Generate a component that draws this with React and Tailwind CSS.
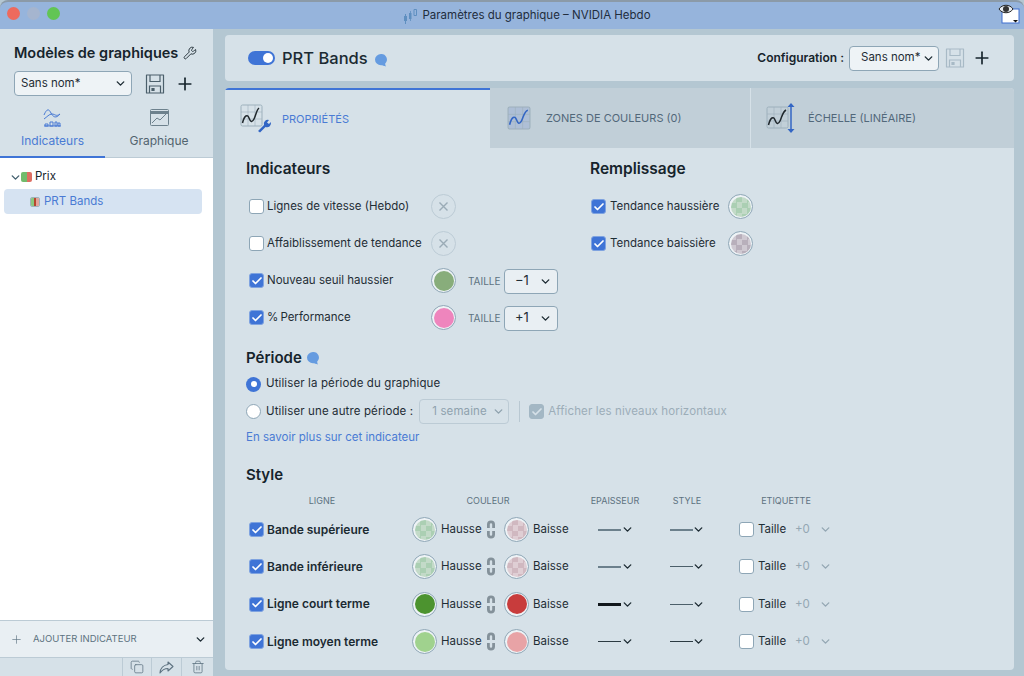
import { Check, ChevronDown, Plus, Wrench, Copy, Trash2 } from "lucide-react";

const font = { fontFamily: "Inter, 'Noto Sans', sans-serif" };

const Checkbox = ({ checked, faded }) => (
  <span
    className={`flex h-[15px] w-[15px] shrink-0 items-center justify-center rounded-[3px] border ${
      checked
        ? faded
          ? "border-[#a3b7c4] bg-[#a3b7c4]"
          : "border-[#7fa3e0] bg-[#3f74d6]"
        : "border-[#8ea6b6] bg-white"
    }`}
  >
    {checked && <Check size={12} strokeWidth={3.5} className={faded ? "text-[#d6e1e8]" : "text-white"} />}
  </span>
);

const Swatch = ({ className }) => (
  <span className="flex h-[25px] w-[25px] shrink-0 items-center justify-center rounded-full border border-[#8ea6b6] bg-[#eef3f6]">
    <span className={`block h-[20px] w-[20px] rounded-full ${className}`} />
  </span>
);

const Disabled = () => (
  <span className="flex h-[25px] w-[25px] shrink-0 items-center justify-center rounded-full border border-[#bccbd5] text-[#9aabb6]">
    <svg width="11" height="11" viewBox="0 0 11 11" fill="none" stroke="currentColor" strokeWidth="1.4">
      <path d="M1.5 1.5l8 8M9.5 1.5l-8 8" />
    </svg>
  </span>
);

const Chev = ({ className = "text-[#1d2b33]" }) => (
  <ChevronDown size={13} strokeWidth={2.6} className={`-mx-px shrink-0 ${className}`} />
);

const Disk = ({ className, size = 20 }) => (
  <svg width={size} height={size} viewBox="0 0 20 20" fill="none" stroke="currentColor" strokeWidth="1.2" className={className}>
    <path d="M1.5 1h17v18h-17z" strokeLinejoin="round" />
    <path d="M5 1v6.5h10V1M4.5 19v-7h11v7" />
    <path d="M7 14.5h2v2H7z" fill="currentColor" />
  </svg>
);

const Bubble = ({ className = "" }) => (
  <svg width="14" height="14" viewBox="0 0 14 14" className={className}>
    <path d="M7 1a6 5.6 0 1 0 0 11.2c1.5 0 3 .6 5 1.3-.6-1-.9-2-.8-2.9A5.6 5.6 0 0 0 7 1z" fill="#659be0" />
  </svg>
);

const GridBox = ({ fill = "none", stroke = "#9db0bc" }) => (
  <>
    <rect x="1" y="1" width="21" height="21" rx="1.5" fill={fill} stroke={stroke} />
    <path d="M8 1v21M15 1v21M1 8h21M1 15h21" stroke={stroke} strokeWidth="0.6" />
  </>
);

const PropsIcon = () => (
  <svg width="32" height="30" viewBox="0 0 32 30" fill="none">
    <GridBox />
    <path d="M2.5 19c2-8 5-9 6.5-5s3 5 5 1 2.500-9 5-11" stroke="#20282d" strokeWidth="1.5" />
    <path d="M18 27l6-6a4 4 0 0 1 5-5l-2 2.500 2 1.500 1.800-2a4 4 0 0 1-5.300 5l-5.500 5.500z" fill="#3366c4" />
  </svg>
);

const ZonesIcon = () => (
  <svg width="24" height="24" viewBox="0 0 23 23" fill="none">
    <GridBox fill="#aebfd6" />
    <path d="M2.500 18c2-8 5-9 6.500-5s3 5 5 1 2.500-9 6-10" stroke="#3366c4" strokeWidth="1.500" />
  </svg>
);

const ScaleIcon = () => (
  <svg width="30" height="32" viewBox="0 0 30 32" fill="none">
    <g transform="translate(0 4)">
      <GridBox />
      <path d="M2.500 19c2-8 5-9 6.500-5s3 5 5 1 2.500-9 6-11" stroke="#20282d" strokeWidth="1.500" />
    </g>
    <path d="M25 4v24" stroke="#3366c4" strokeWidth="1.500" />
    <path d="M25 1l3.500 4h-7zM25 31l3.500-4h-7z" fill="#3366c4" />
  </svg>
);

const CandleIcon = () => (
  <svg width="15" height="16" viewBox="0 0 15 16" fill="#5f8fc0">
    <path d="M1 8h3v5H1zM2 6h1v10H2zM6 5h2.500v6H6zM7 3h.8v10H7z" />
    <path d="M11 1.500h2.500v6H11z" fill="none" stroke="#5f8fc0" />
  </svg>
);

const Dash = ({ weight = "h-px", tone = "bg-[#3c4f5a]", w = "w-[23px]" }) => <span className={`block ${w} ${weight} ${tone}`} />;

const green = "bg-[repeating-conic-gradient(#abcfb3_0_25%,#c3dac8_0_50%)] bg-[length:11px_11px]";
const rose = "bg-[repeating-conic-gradient(#d0b8c0_0_25%,#dfced4_0_50%)] bg-[length:11px_11px]";
const mauve = "bg-[repeating-conic-gradient(#b8afbb_0_25%,#cfc9d2_0_50%)] bg-[length:11px_11px]";

const indicators = [
  { label: "Lignes de vitesse (Hebdo)" },
  { label: "Affaiblissement de tendance" },
  { label: "Nouveau seuil haussier", checked: true, color: "bg-[#88ad7b]", size: "−1" },
  { label: "%\u2009Performance", checked: true, color: "bg-[#ee85bd]", size: "+1" },
];

const styleRows = [
  { label: "Bande supérieure", up: green, down: rose, thick: "h-[2px]", tone: "bg-[#6c808c]", styleTone: "h-[2px] bg-[#6c808c]" },
  { label: "Bande inférieure", up: green, down: rose, thick: "h-[2px]", tone: "bg-[#6c808c]", styleTone: "h-px bg-[#4c5f6a]" },
  { label: "Ligne court terme", up: "bg-[#4c932f]", down: "bg-[#c83c3c]", thick: "h-[3px]", tone: "bg-[#12181c]", styleTone: "h-px bg-[#4c5f6a]" },
  { label: "Ligne moyen terme", up: "bg-[#a0d28e]", down: "bg-[#e8a3a6]", thick: "h-px", tone: "bg-[#2c3a42]", styleTone: "h-px bg-[#2c3a42]" },
];

const Link2 = () => (
  <svg width="8" height="19" viewBox="0 0 8 19" fill="none" stroke="#84919a" strokeWidth="2.800">
    <path d="M1.400 8V4.500a2.600 2.600 0 0 1 5.200 0V8M1.400 11v3.500a2.600 2.600 0 0 0 5.200 0V11" />
  </svg>
);

const App = () => {
  return (
    <div style={font} className="flex h-[676px] w-[1024px] flex-col overflow-hidden bg-[#b4c7d2] text-[11.500px] text-[#1f2d35]">
      <div className="relative flex h-[29px] shrink-0 items-center justify-center gap-[4px] rounded-t-[8px] border-t-2 border-[#8b9aa8] bg-[#96b4dc] pl-[30px] text-[#1f2d3d]">
        <div className="absolute left-[7px] top-[5px] flex gap-[7px]">
          <span className="h-[13px] w-[13px] rounded-full bg-[#ed6a5e]" />
          <span className="h-[13px] w-[13px] rounded-full bg-[#a5b5cf]" />
          <span className="h-[13px] w-[13px] rounded-full bg-[#62c554]" />
        </div>
        <CandleIcon />
        <span>Paramètres du graphique – NVIDIA Hebdo</span>
        <svg width="22" height="20" viewBox="0 0 22 20" className="absolute right-[4px] top-[2px]">
          <rect x="4" y="5" width="17" height="14" fill="#fff" stroke="#3f6fd0" />
          <path d="M1 5c3-5 11-5 14 0-3 5-11 5-14 0z" fill="#e8edf2" stroke="#222" />
          <circle cx="8" cy="5" r="3" fill="#333" />
          <path d="M15 16h5l-2.500 2.500z" fill="#111" />
        </svg>
      </div>

      <div className="flex min-h-0 flex-1">
        <aside className="flex w-[213px] shrink-0 flex-col bg-[#d6e1e8]">
          <div className="flex items-center gap-[5px] pl-[14px] pt-[15px] text-[14.500px] font-semibold leading-[18px] text-[#16242c]">
            Modèles de graphiques
            <Wrench size={14} strokeWidth={1.500} />
          </div>
          <div className="mt-[9px] flex items-center pl-[14px]">
            <div className="flex h-[25px] w-[118px] items-center justify-between rounded-[4px] border border-[#8ea6b6] bg-[#eef3f6] pl-[6px] pr-[5px]">
              Sans nom*
              <Chev />
            </div>
            <Disk className="ml-[13px] text-[#4b5f6b]" />
            <Plus size={20} strokeWidth={2} className="ml-[10px] text-[#16242c]" />
          </div>
          <div className="mt-[13px] flex h-[49px] border-b border-[#bccbd5] text-[12px]">
            <div className="-mb-px flex w-[105px] flex-col items-center border-b-2 border-[#3f74d6] text-[#4a7bd4]">
              <svg width="19" height="18" viewBox="0 0 19 18" fill="none" stroke="#4a7bd4" strokeWidth="1">
                <path d="M1 6c3-7 5-6 7-2s5 6 9 1M1 10c3-2 5-5 8-5s4 3 8 0" />
                <path d="M1 17h17M2 15h3v2H2zM7 13h3v4H7zM12 13h2v4h-2zM15 14h2v3h-2z" />
              </svg>
              <span className="mt-[6px] leading-[16px]">Indicateurs</span>
            </div>
            <div className="flex flex-1 flex-col items-center text-[#52646f]">
              <svg width="19" height="18" viewBox="0 0 19 18" fill="none" stroke="#6d818d">
                <rect x="0.500" y="0.500" width="18" height="16" rx="1" />
                <path d="M0.500 3.500h18" strokeWidth="3" />
                <path d="M2 14l5-5 3 2 6-6" />
              </svg>
              <span className="mt-[6px] leading-[16px]">Graphique</span>
            </div>
          </div>

          <div className="flex-1 bg-white pt-[10px]">
            <div className="flex h-[18px] items-center pl-[10px]">
              <Chev className="text-[#44606f]" />
              <span className="flex h-[10px] w-[11px] overflow-hidden rounded-[2px]">
                <span className="w-1/2 bg-[#71bb6c]" />
                <span className="w-1/2 bg-[#dd6e62]" />
              </span>
              <span className="ml-[3px] text-[#16242c]">Prix</span>
            </div>
            <div className="ml-[4px] mr-[11px] mt-[3px] flex h-[25px] items-center rounded-[4px] bg-[#d6e3f2] pl-[26px] text-[#4a7bd4]">
              <span className="flex h-[10px] w-[10px] overflow-hidden rounded-[2px] border border-[#9fb1ba]">
                <span className="w-1/3 bg-[#8ac77f]" />
                <span className="w-1/3 bg-[#b5462f]" />
                <span className="w-1/3 bg-[#e2a49b]" />
              </span>
              <span className="ml-[4px]">PRT Bands</span>
            </div>
          </div>

          <div className="flex h-[38px] shrink-0 items-center border-y border-[#bccbd5] bg-[#e9eff3] pl-[10px] pr-[7px] pt-[1px] text-[9.500px] text-[#5d7280]">
            <Plus size={13} strokeWidth={1.200} />
            <span className="ml-[10px] flex-1">AJOUTER INDICATEUR</span>
            <Chev />
          </div>
          <div className="flex h-[18px] shrink-0 justify-end text-[#5d7280]">
            <span className="flex w-[30px] items-center justify-center border-x border-[#bccbd5]"><Copy size={14} strokeWidth={1.300} /></span>
            <span className="flex w-[30px] items-center justify-center border-r border-[#bccbd5]">
              <svg width="15" height="13" viewBox="0 0 15 13" fill="none" stroke="currentColor" strokeWidth="1.100" strokeLinejoin="round">
                <path d="M9 1l5 4.500L9 10V7.500C5.500 7.500 3 9 1 12c.3-4.500 3.500-8 8-8.500z" />
              </svg>
            </span>
            <span className="flex w-[31px] items-center justify-center"><Trash2 size={14} strokeWidth={1.300} /></span>
          </div>
        </aside>

        <main className="flex min-w-0 flex-1 flex-col gap-[7px] pb-[6px] pl-[12px] pr-[10px] pt-[6px]">
          <header className="flex h-[46px] shrink-0 items-center rounded-[4px] bg-[#d6e1e8] pl-[23px] pr-[22px]">
            <span className="flex h-[14px] w-[27px] items-center justify-end rounded-full bg-[#3f74d6] pr-[2px]">
              <span className="h-[10px] w-[10px] rounded-full bg-white" />
            </span>
            <span className="ml-[7px] text-[16.500px] font-medium text-[#1b2a32]">PRT Bands</span>
            <Bubble className="ml-[6px] mt-[3px]" />
            <span className="ml-auto text-[12px] font-semibold text-[#16242c]">Configuration :</span>
            <span className="ml-[5px] flex h-[25px] w-[90px] items-center justify-between whitespace-nowrap rounded-[4px] border border-[#8ea6b6] bg-[#eef3f6] pl-[11px] pr-[4px]">
              Sans nom*
              <Chev />
            </span>
            <Disk className="ml-[6px] text-[#a8bac6]" />
            <Plus size={20} strokeWidth={2} className="ml-[7px] text-[#16242c]" />
          </header>

          <section className="min-h-0 flex-1 overflow-hidden rounded-[4px] bg-[#d6e1e8]">
            <div className="flex h-[60px] text-[11px]">
              <div className="flex w-[265px] items-center border-t-2 border-[#3f74d6] pl-[15px] text-[#4a7bd4]">
                <PropsIcon />
                <span className="ml-[10px]">PROPRIÉTÉS</span>
              </div>
              <div className="flex w-[261px] items-center border-r border-[#d6e1e8] bg-[#c1cfd8] pl-[17px] text-[#52687a]">
                <ZonesIcon />
                <span className="ml-[15px]">ZONES DE COULEURS (0)</span>
              </div>
              <div className="flex flex-1 items-center bg-[#c1cfd8] pl-[15px] text-[#52687a]">
                <ScaleIcon />
                <span className="ml-[12px]">ÉCHELLE (LINÉAIRE)</span>
              </div>
            </div>

            <div className="pl-[21px] pt-[11px]">
              <div className="flex">
                <div className="w-[344px]">
                  <h2 className="text-[15.500px] font-semibold leading-[20px] text-[#16242c]">Indicateurs</h2>
                  <div className="mt-[9px]">
                    {indicators.map((row) => (
                      <div key={row.label} className="flex h-[37px] items-center pl-[3px]">
                        <Checkbox checked={row.checked} />
                        <span className="ml-[3px] w-[164px] whitespace-nowrap">{row.label}</span>
                        {row.color ? <Swatch className={row.color} /> : <Disabled />}
                        {row.size && (
                          <>
                            <span className="ml-[12px] mt-[2px] w-[30px] text-[10px] text-[#5d7280]">TAILLE</span>
                            <span className="ml-[6px] mt-[1px] flex h-[25px] w-[54px] items-center justify-between rounded-[4px] border border-[#8ea6b6] bg-[#e9eff3] pl-[10px] pr-[6px] text-[13px]">
                              {row.size}
                              <Chev />
                            </span>
                          </>
                        )}
                      </div>
                    ))}
                  </div>
                </div>
                <div>
                  <h2 className="text-[15.500px] font-semibold leading-[20px] text-[#16242c]">Remplissage</h2>
                  <div className="mt-[9px]">
                    {[
                      { label: "Tendance haussière", swatch: green },
                      { label: "Tendance baissière", swatch: mauve },
                    ].map((row) => (
                      <div key={row.label} className="flex h-[37px] items-center pl-[1px]">
                        <Checkbox checked />
                        <span className="ml-[4px] w-[118px] whitespace-nowrap">{row.label}</span>
                        <Swatch className={row.swatch} />
                      </div>
                    ))}
                  </div>
                </div>
              </div>

              <h2 className="mt-[12px] flex items-center gap-[4px] text-[15px] font-semibold leading-[20px] text-[#16242c]">
                Période
                <Bubble />
              </h2>
              <div className="mt-[7px] flex h-[18px] items-center tracking-[0.12px]">
                <span className="flex h-[15px] w-[15px] items-center justify-center rounded-full bg-[#3f74d6]">
                  <span className="h-[6px] w-[6px] rounded-full bg-white" />
                </span>
                <span className="ml-[5px]">Utiliser la période du graphique</span>
              </div>
              <div className="mt-[6px] flex h-[25px] items-center tracking-[0.12px]">
                <span className="h-[15px] w-[15px] rounded-full border border-[#8ea6b6] bg-white" />
                <span className="ml-[5px]">Utiliser une autre période :</span>
                <span className="ml-[6px] flex h-[25px] w-[90px] items-center justify-between rounded-[4px] border border-[#bccbd5] pl-[12px] pr-[4px] text-[#8fa2ae]">
                  1 semaine
                  <Chev className="text-[#8fa2ae]" />
                </span>
                <span className="ml-[10px] h-[21px] w-px bg-[#b9c8d2]" />
                <span className="ml-[9px]"><Checkbox checked faded /></span>
                <span className="ml-[4px] text-[#9cadb8]">Afficher les niveaux horizontaux</span>
              </div>
              <div className="mt-[6px] leading-[14px] text-[#4a7bd4]">En savoir plus sur cet indicateur</div>

              <h2 className="mt-[21px] text-[15px] font-semibold leading-[20px] text-[#16242c]">Style</h2>
              <div className="mt-[9px] grid grid-cols-[152px_180px_74px_70px_128px] text-center text-[9px] leading-[14px] text-[#5d7280]">
                <span>LIGNE</span>
                <span>COULEUR</span>
                <span>EPAISSEUR</span>
                <span>STYLE</span>
                <span>ETIQUETTE</span>
              </div>
              <div className="mt-[3px]">
                {styleRows.map((row) => (
                  <div key={row.label} className="grid h-[37.300px] grid-cols-[152px_180px_74px_70px_128px] items-center">
                    <div className="flex items-center pl-[3px]">
                      <Checkbox checked />
                      <span className="ml-[3px] whitespace-nowrap text-[12px] font-semibold text-[#1b2a32]">{row.label}</span>
                    </div>
                    <div className="flex items-center pl-[14px]">
                      <Swatch className={row.up} />
                      <span className="ml-[4px] w-[46px]">Hausse</span>
                      <Link2 />
                      <span className="ml-[9px]"><Swatch className={row.down} /></span>
                      <span className="ml-[4px]">Baisse</span>
                    </div>
                    <div className="flex items-center gap-px pl-[20px]">
                      <Dash weight={row.thick} tone={row.tone} />
                      <Chev />
                    </div>
                    <div className="flex items-center pl-[18px]">
                      <span className={`block w-[23px] ${row.styleTone}`} />
                      <Chev />
                    </div>
                    <div className="flex items-center pl-[17px]">
                      <Checkbox />
                      <span className="ml-[4px] w-[37px]">Taille</span>
                      <span className="w-[25px] text-[#94a7b3]">+0</span>
                      <Chev className="text-[#94a7b3]" />
                    </div>
                  </div>
                ))}
              </div>
            </div>
          </section>
        </main>
      </div>
    </div>
  );
};

export default App;
